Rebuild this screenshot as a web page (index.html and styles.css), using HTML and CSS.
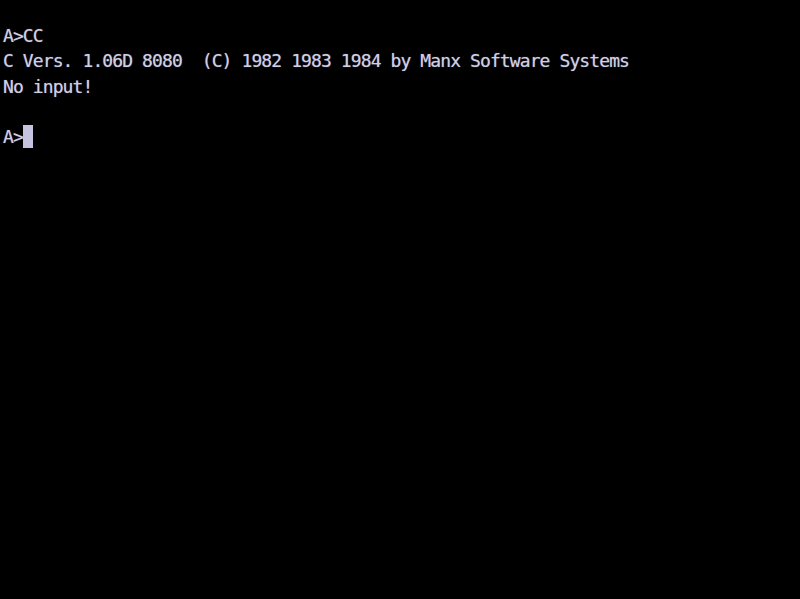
FILE: index.html
```html
<!DOCTYPE html>
<html>
<head>
<meta charset="utf-8">
<link rel="stylesheet" href="styles.css">
</head>
<body>
<pre class="screen"><span class="line">A&gt;CC</span>
<span class="line">C Vers. 1.06D 8080  (C) 1982 1983 1984 by Manx Software Systems</span>
<span class="line">No input!</span>
<span class="line"></span>
<span class="line">A&gt;<span class="cursor"></span></span></pre>
</body>
</html>
```

FILE: styles.css
```css
html, body {
  margin: 0;
  padding: 0;
  background: #000;
  width: 800px;
  height: 599px;
  overflow: hidden;
}
.screen {
  margin: 0;
  padding: 23px 0 0 3px;
  font-family: "DejaVu Sans Mono", monospace;
  font-size: 18px;
  letter-spacing: -0.9px;
  line-height: 25.25px;
  color: #cfcfe6;
  text-shadow: 0 0 1px rgba(200, 200, 235, 0.6);
  white-space: pre;
}
.cursor {
  display: inline-block;
  width: 10px;
  height: 23px;
  background: #c4c4e2;
  vertical-align: top;
  margin-top: 1px;
}
```
